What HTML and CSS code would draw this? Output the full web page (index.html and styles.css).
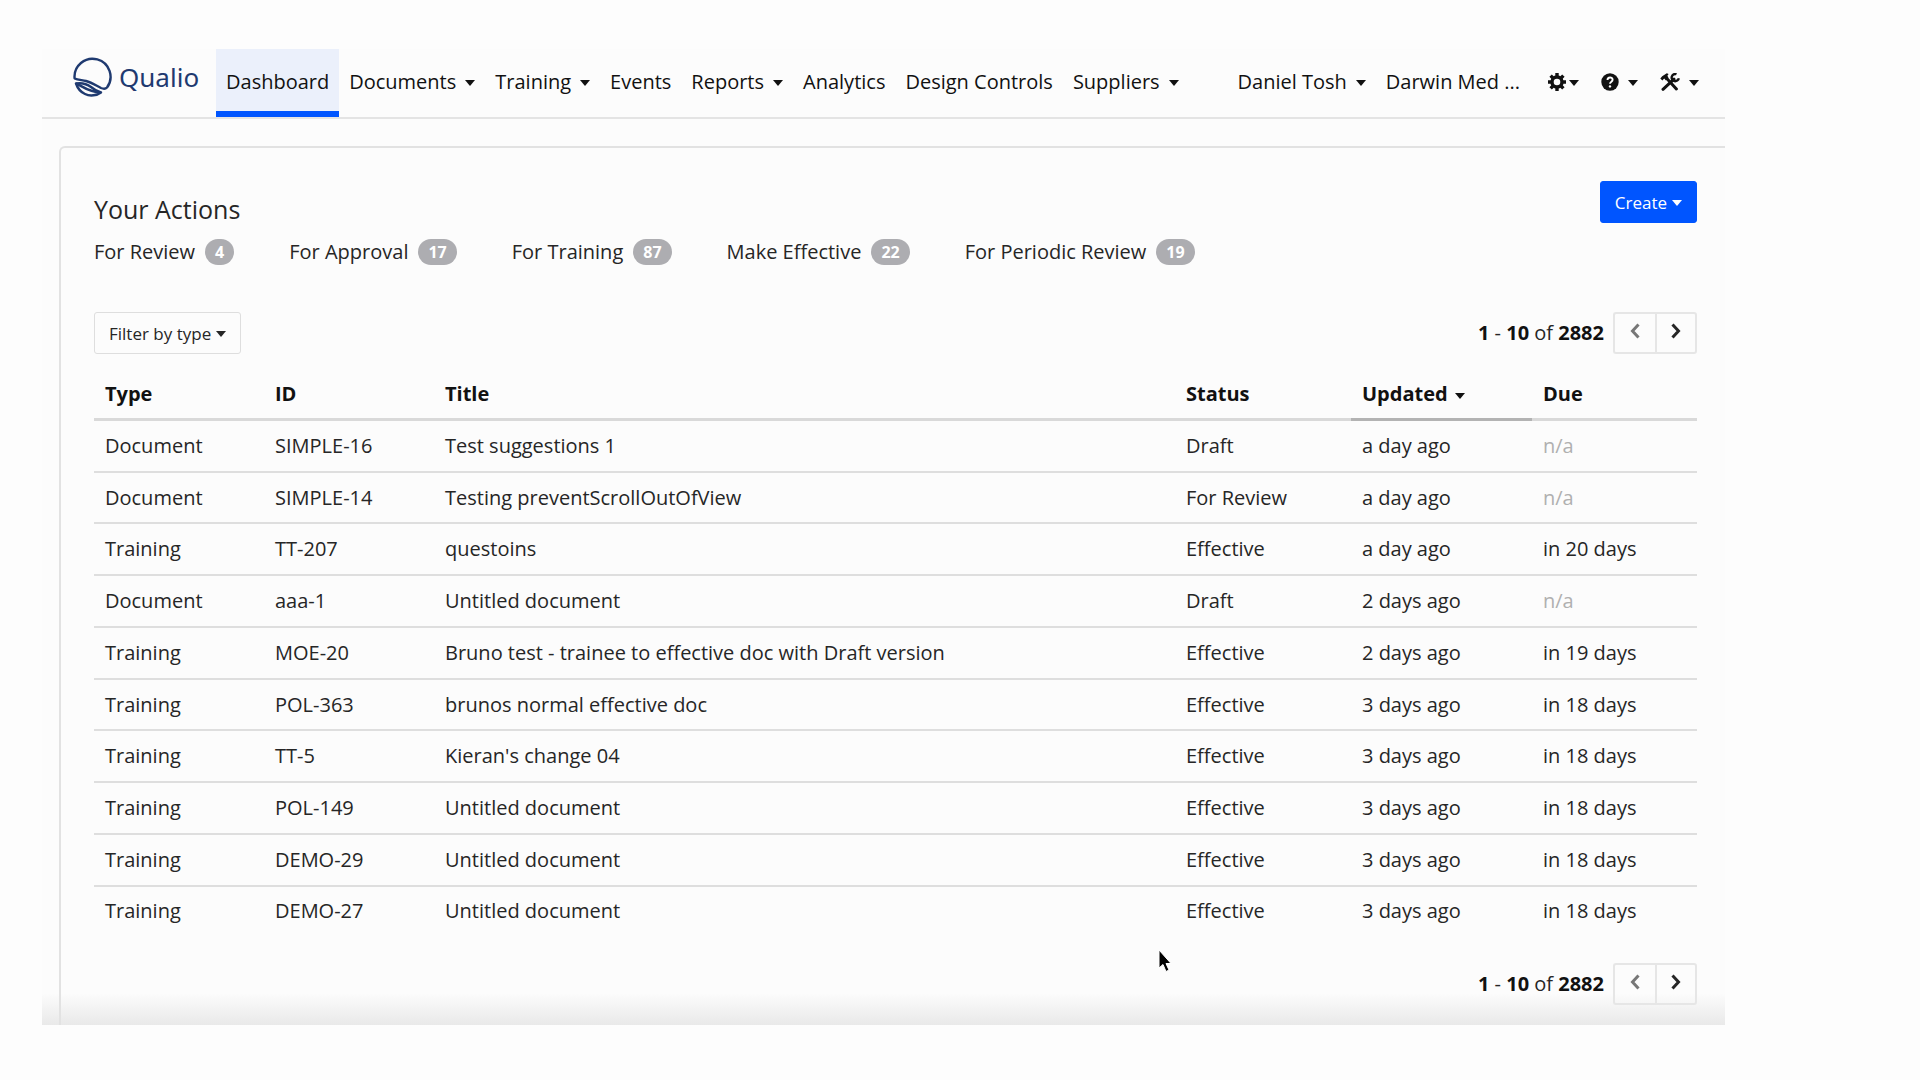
FILE: index.html
```html
<!DOCTYPE html>
<html lang="en">
<head>
  <meta charset="UTF-8" />
  <title>Qualio - Dashboard</title>
  <meta name="viewport" content="width=device-width, initial-scale=1.0" />
  <link rel="stylesheet" href="styles.css">
</head>
<body>

  <div class="app">

    <!-- Top navigation -->
    <header class="navbar">
      <a class="brand" href="#">
        <svg class="brand-mark" viewBox="0 0 40 40" aria-hidden="true">
          <path d="M2.6 21.5 A18 18 0 1 1 35 30.5 C33.5 32 31.5 32 29 31 C24 28.5 20 25.5 14 24 C10 23 6 23 2.6 21.5 Z" />
          <path d="M4 26.5 C10 25.5 15 27 19 30 C22 32.5 25 34.5 29 35.5 C25 38.5 18 39.5 13 37 C8.5 35 5.5 31 4 26.5 Z" />
          <path d="M4 26.5 C11 29 15 35 29 35.5" />
        </svg>
        <span class="brand-name">Qualio</span>
      </a>

      <nav class="nav-links">
        <a class="nav-link active" href="#">Dashboard</a>
        <a class="nav-link" href="#">Documents <span class="caret"></span></a>
        <a class="nav-link" href="#">Training <span class="caret"></span></a>
        <a class="nav-link" href="#">Events</a>
        <a class="nav-link" href="#">Reports <span class="caret"></span></a>
        <a class="nav-link" href="#">Analytics</a>
        <a class="nav-link" href="#">Design Controls</a>
        <a class="nav-link" href="#">Suppliers <span class="caret"></span></a>
      </nav>

      <div class="nav-user">
        <a class="nav-link" href="#">Daniel Tosh <span class="caret"></span></a>
        <a class="nav-link" href="#">Darwin Med ...</a>
        <button class="icon-button tight" aria-label="Settings">
          <svg viewBox="0 0 18 18" aria-hidden="true">
            <circle cx="9" cy="9" r="5" fill="none" stroke="currentColor" stroke-width="3.4" />
            <path d="M9 0V3.5M9 14.5V18M0 9H3.5M14.5 9H18M2.6 2.6L5 5M13 13L15.4 15.4M15.4 2.6L13 5M5 13L2.6 15.4" stroke="currentColor" stroke-width="3.4" />
          </svg>
          <span class="caret"></span>
        </button>
        <button class="icon-button" aria-label="Help">
          <svg viewBox="0 0 18 18" aria-hidden="true">
            <circle cx="9" cy="9" r="8.7" fill="currentColor" />
            <path d="M6.5 7 C6.5 3.6 11.6 3.7 11.6 6.7 C11.6 8.7 9 8.6 9 10.8" fill="none" stroke="#fff" stroke-width="1.9" />
            <circle cx="9" cy="13.4" r="1.2" fill="#fff" />
          </svg>
          <span class="caret"></span>
        </button>
        <button class="icon-button" aria-label="Tools">
          <svg class="wide" viewBox="0 0 20 18" aria-hidden="true">
            <path d="M3 16.3L14 6.2" stroke="currentColor" stroke-width="3" stroke-linecap="round" />
            <path d="M16.5 1.2A3.6 3.6 0 1 0 18.8 5.2" fill="none" stroke="currentColor" stroke-width="2.4" />
            <path d="M0.3 5.6L2.2 3.2L6.8 0.2L8.6 0.9L7.4 2.8L8.4 4.8L6 7.4L4.2 5.6L2.4 7.6Z" fill="currentColor" />
            <path d="M6.6 5.2L16.4 16" stroke="currentColor" stroke-width="3" stroke-linecap="round" />
          </svg>
          <span class="caret"></span>
        </button>
      </div>
    </header>

    <!-- Actions panel -->
    <main class="panel">
      <div class="panel-head">
        <h1>Your Actions</h1>
        <button class="create-button">Create <span class="caret"></span></button>
      </div>

      <div class="action-tabs">
        <a href="#">For Review <span class="count">4</span></a>
        <a href="#">For Approval <span class="count">17</span></a>
        <a href="#">For Training <span class="count">87</span></a>
        <a href="#">Make Effective <span class="count">22</span></a>
        <a href="#">For Periodic Review <span class="count">19</span></a>
      </div>

      <div class="toolbar">
        <button class="filter-button">Filter by type <span class="caret"></span></button>
        <div class="pager">
          <span><b>1</b> - <b>10</b> of <b>2882</b></span>
          <div class="pager-buttons">
            <button class="prev" aria-label="Previous page"><svg viewBox="0 0 10 16"><path d="M8.5 1.5L2.5 8L8.5 14.5" /></svg></button>
            <button aria-label="Next page"><svg viewBox="0 0 10 16"><path d="M1.5 1.5L7.5 8L1.5 14.5" /></svg></button>
          </div>
        </div>
      </div>

      <table class="actions-table">
        <colgroup>
          <col class="col-type">
          <col class="col-id">
          <col>
          <col class="col-status">
          <col class="col-updated">
          <col class="col-due">
        </colgroup>
        <thead>
          <tr>
            <th>Type</th>
            <th>ID</th>
            <th>Title</th>
            <th>Status</th>
            <th class="sorted">Updated <span class="caret"></span></th>
            <th>Due</th>
          </tr>
        </thead>
        <tbody>
          <tr><td>Document</td><td>SIMPLE-16</td><td>Test suggestions 1</td><td>Draft</td><td>a day ago</td><td class="muted">n/a</td></tr>
          <tr><td>Document</td><td>SIMPLE-14</td><td>Testing preventScrollOutOfView</td><td>For Review</td><td>a day ago</td><td class="muted">n/a</td></tr>
          <tr><td>Training</td><td>TT-207</td><td>questoins</td><td>Effective</td><td>a day ago</td><td>in 20 days</td></tr>
          <tr><td>Document</td><td>aaa-1</td><td>Untitled document</td><td>Draft</td><td>2 days ago</td><td class="muted">n/a</td></tr>
          <tr><td>Training</td><td>MOE-20</td><td>Bruno test - trainee to effective doc with Draft version</td><td>Effective</td><td>2 days ago</td><td>in 19 days</td></tr>
          <tr><td>Training</td><td>POL-363</td><td>brunos normal effective doc</td><td>Effective</td><td>3 days ago</td><td>in 18 days</td></tr>
          <tr><td>Training</td><td>TT-5</td><td>Kieran's change 04</td><td>Effective</td><td>3 days ago</td><td>in 18 days</td></tr>
          <tr><td>Training</td><td>POL-149</td><td>Untitled document</td><td>Effective</td><td>3 days ago</td><td>in 18 days</td></tr>
          <tr><td>Training</td><td>DEMO-29</td><td>Untitled document</td><td>Effective</td><td>3 days ago</td><td>in 18 days</td></tr>
          <tr><td>Training</td><td>DEMO-27</td><td>Untitled document</td><td>Effective</td><td>3 days ago</td><td>in 18 days</td></tr>
        </tbody>
      </table>

      <div class="toolbar bottom">
        <div class="pager">
          <span><b>1</b> - <b>10</b> of <b>2882</b></span>
          <div class="pager-buttons">
            <button class="prev" aria-label="Previous page"><svg viewBox="0 0 10 16"><path d="M8.5 1.5L2.5 8L8.5 14.5" /></svg></button>
            <button aria-label="Next page"><svg viewBox="0 0 10 16"><path d="M1.5 1.5L7.5 8L1.5 14.5" /></svg></button>
          </div>
        </div>
      </div>
    </main>

    <!-- Mouse pointer -->
    <svg class="pointer" viewBox="0 0 16 26" aria-hidden="true">
      <path d="M2 2V20L6 16.5L9 23.5L12 22L9 15.5H14Z" />
    </svg>
  </div>

</body>
</html>
```

FILE: styles.css
```css
:root {
  --blue: #0055ff;
  --navy: #1f3a70;
  --text: #262626;
  --line: #dedede;
  --badge: #adadb1;
}

* {
  box-sizing: border-box;
}

body {
  margin: 0;
  padding: 49px 195px 55px 42px;
  background-color: #fdfdfd;
  color: var(--text);
  font-family: "Open Sans", "Noto Sans", sans-serif;
  font-size: 20px;
  line-height: 28px;
}

a {
  color: inherit;
  text-decoration: none;
}

button {
  font-family: inherit;
  color: inherit;
  cursor: pointer;
}

.app {
  position: relative;
  background: linear-gradient(to top, #e9e9e9, #fcfcfc 32px);
}

.caret {
  display: inline-block;
  margin-top: 2px;
  border: 5px solid transparent;
  border-top: 6px solid currentColor;
  border-bottom: 0;
  vertical-align: middle;
}

/* Navigation */
.navbar {
  display: flex;
  height: 70px;
  padding: 0 15px 0 30px;
  border-bottom: 2px solid #e4e4e4;
  color: #111;
}

.brand {
  display: flex;
  align-items: center;
  gap: 7px;
  width: 144px;
  padding-bottom: 12px;
  color: var(--navy);
}

.brand-mark {
  width: 40px;
  height: 40px;
  fill: none;
  stroke: currentColor;
  stroke-width: 2.4;
  stroke-linejoin: round;
}

.brand-name {
  font-family: "Noto Sans", sans-serif;
  font-size: 26px;
}

.nav-links,
.nav-user {
  display: flex;
}

.nav-user {
  margin-left: auto;
}

.nav-link {
  display: flex;
  align-items: center;
  gap: 9px;
  padding: 3px 10px 5px;
  white-space: nowrap;
}

.nav-link.active {
  background-color: #ebf0fb;
  padding-bottom: 0;
  border-bottom: 6px solid var(--blue);
}

.icon-button {
  display: flex;
  align-items: center;
  gap: 9px;
  padding: 3px 11px 5px;
  border: 0;
  background: none;
}

.icon-button.tight {
  gap: 3px;
  padding-left: 18px;
}

.icon-button svg {
  width: 18px;
  height: 18px;
}

.icon-button svg.wide {
  width: 20px;
}

/* Panel */
.panel {
  margin: 27px 0 0 17px;
  padding: 33px 28px 20px 33px;
  border: 2px solid #e2e2e2;
  border-right: 0;
  border-bottom: 0;
  border-top-left-radius: 6px;
}

.panel-head {
  display: flex;
  justify-content: space-between;
  height: 57px;
}

.panel-head h1 {
  margin: 12px 0 0;
  font-size: 25px;
  font-weight: 400;
  line-height: 32px;
}

.create-button,
.filter-button {
  display: flex;
  align-items: center;
  gap: 5px;
  height: 42px;
  padding: 0 14px;
  border: 1px solid var(--line);
  border-radius: 3px;
  background: none;
  font-size: 17px;
}

.create-button {
  border-color: var(--blue);
  background-color: var(--blue);
  color: white;
}

.action-tabs {
  display: flex;
  gap: 55px;
}

.action-tabs a {
  display: flex;
  align-items: center;
  gap: 10px;
}

.count {
  padding: 0 10px;
  border-radius: 13px;
  background-color: var(--badge);
  color: white;
  font-size: 16px;
  font-weight: 700;
  line-height: 26px;
}

.toolbar {
  display: flex;
  justify-content: space-between;
  margin-top: 46px;
}

.toolbar.bottom {
  justify-content: flex-end;
  margin-top: 28px;
}

.pager {
  display: flex;
  align-items: center;
  gap: 9px;
}

.pager b {
  color: #111;
}

.pager-buttons {
  display: flex;
}

.pager-buttons button {
  display: flex;
  align-items: center;
  justify-content: center;
  width: 42px;
  height: 42px;
  padding: 0 0 4px;
  border: 2px solid #e6e6e6;
  border-radius: 0 3px 3px 0;
  background: none;
}

.pager-buttons .prev {
  border-right: 0;
  border-radius: 3px 0 0 3px;
  color: #777;
}

.pager-buttons svg {
  width: 10px;
  height: 16px;
  fill: none;
  stroke: currentColor;
  stroke-width: 3;
}

/* Table */
.actions-table {
  width: 100%;
  height: 566px;
  margin-top: 15px;
  border-collapse: separate;
  border-spacing: 0;
  table-layout: fixed;
  text-align: left;
}

.col-type,
.col-id {
  width: 170px;
}

.col-status {
  width: 176px;
}

.col-updated {
  width: 181px;
}

.col-due {
  width: 165px;
}

.actions-table th,
.actions-table td {
  padding: 0 11px;
}

.actions-table th {
  height: 52px;
  border-bottom: 3px solid #d9d9d9;
  color: #111;
}

.actions-table th.sorted {
  border-bottom-color: #b3b3b3;
}

.sorted .caret {
  margin-left: 2px;
}

.actions-table td {
  border-bottom: 2px solid var(--line);
}

.actions-table tbody tr:last-child td {
  border-bottom: 0;
}

.actions-table td.muted {
  color: #b0b0b0;
}

/* Pointer */
.pointer {
  position: absolute;
  top: 899px;
  left: 1115px;
  width: 16px;
  height: 26px;
  fill: #000;
  stroke: #fff;
  stroke-width: 1;
}
```
